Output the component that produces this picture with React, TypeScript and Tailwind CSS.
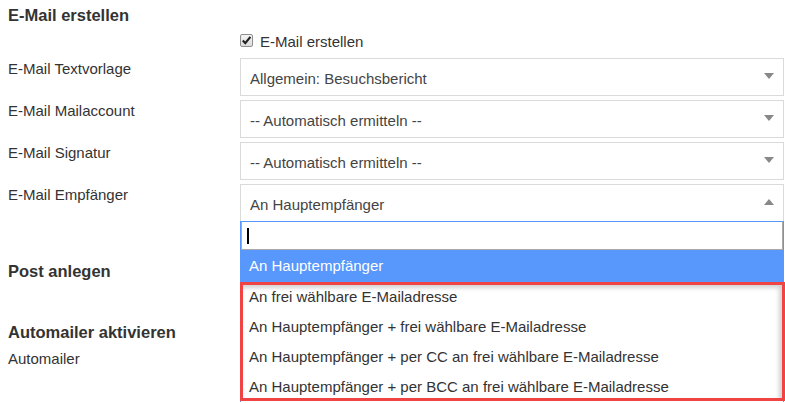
import React from "react";

function Arrow({ up = false }: { up?: boolean }) {
  return (
    <svg width="10" height="6" viewBox="0 0 10 6" className="mr-[9px] -mt-[2px] shrink-0">
      {up ? <path d="M0 6 L5 0 L10 6 Z" fill="#888" /> : <path d="M0 0 L10 0 L5 6 Z" fill="#888" />}
    </svg>
  );
}

function Row({ label, value, up = false }: { label: string; value: string; up?: boolean }) {
  return (
    <div className="flex">
      <div className="w-[240px] pl-2 pt-[1px] text-[15px] leading-[20px] text-[#333]">{label}</div>
      <div className="w-[544px] h-[38px] border border-[#dadada] bg-white flex items-center justify-between">
        <span className="pl-[9px] pt-[4px] text-[15px] leading-[20px] text-[#444]">{value}</span>
        <Arrow up={up} />
      </div>
    </div>
  );
}

export default function App() {
  const options = [
    "An frei wählbare E-Mailadresse",
    "An Hauptempfänger + frei wählbare E-Mailadresse",
    "An Hauptempfänger + per CC an frei wählbare E-Mailadresse",
    "An Hauptempfänger + per BCC an frei wählbare E-Mailadresse",
  ];
  return (
    <div className="relative w-[785px] h-[403px] overflow-hidden bg-white font-['Liberation_Sans',Arial,sans-serif] text-[#333]">
      <div className="pl-2 pt-[5px]">
        <div className="text-[16.5px] font-bold leading-[20px]">E-Mail erstellen</div>
      </div>
      <div className="mt-[7px] flex h-[20px]">
        <div className="w-[240px]" />
        <div className="flex items-start">
          <div className="mt-[2px] w-[13px] h-[13px] rounded-[2px] border border-[#8f8f8f] bg-gradient-to-b from-[#f4f4f4] to-[#dcdcdc] flex items-center justify-center">
            <svg width="11" height="11" viewBox="0 0 11 11">
              <path d="M1.8 5.6 L4.3 8.2 L9.4 1.9" fill="none" stroke="#222" strokeWidth="2.2" />
            </svg>
          </div>
          <span className="ml-[7px] text-[15px] leading-[20px] text-[#333]">E-Mail erstellen</span>
        </div>
      </div>
      <div className="mt-[6px] flex flex-col gap-[4px]">
        <Row label="E-Mail Textvorlage" value="Allgemein: Besuchsbericht" />
        <Row label="E-Mail Mailaccount" value="-- Automatisch ermitteln --" />
        <Row label="E-Mail Signatur" value="-- Automatisch ermitteln --" />
        <Row label="E-Mail Empfänger" value="An Hauptempfänger" up />
      </div>
      <div className="pl-2 mt-[39px] text-[16.5px] font-bold leading-[20px]">Post anlegen</div>
      <div className="pl-2 mt-[41px] text-[16.5px] font-bold leading-[20px]">Automailer aktivieren</div>
      <div className="pl-2 mt-[7px] text-[15px] leading-[20px]">Automailer</div>
      <div className="pl-2 mt-[31px] text-[16.5px] font-bold leading-[20px]">Aufgabe anlegen</div>

      <div className="absolute left-[240px] top-[221px] w-[544px] bg-white border-x border-[#5897fb]">
        <div className="h-[29px] border border-[#aaa] border-t-[#5897fb] bg-white flex items-center pl-[5px]">
          <div className="w-[2px] h-[16px] bg-black" />
        </div>
        <div className="h-[32px] bg-[#5897fb] text-white flex items-center pl-[8px] text-[15px] leading-[20px]">
          An Hauptempfänger
        </div>
        {options.map((o) => (
          <div key={o} className="h-[30px] flex items-center pl-[8px] text-[15px] leading-[20px] text-[#333]">
            {o}
          </div>
        ))}
      </div>

      <div className="absolute left-[240px] top-[282px] w-[545px] h-[119px] border-[3px] border-[#f04343] shadow-[inset_-3px_3px_4px_rgba(0,0,0,0.18)]" />
    </div>
  );
}
